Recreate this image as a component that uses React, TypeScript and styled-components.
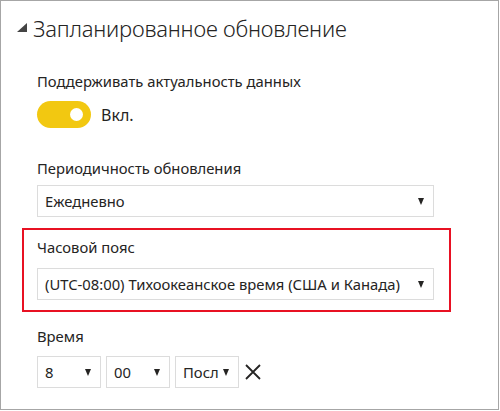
import React from "react";
import styled, { createGlobalStyle } from "styled-components";

const Global = createGlobalStyle`
  html, body { margin: 0; padding: 0; background: #fff; }
  body { font-family: "Noto Sans", "Open Sans", sans-serif; color: #252423; }
`;

const Frame = styled.div`
  box-sizing: border-box;
  width: 499px;
  height: 410px;
  border: 1px solid #a6a6a6;
  background: #fff;
  overflow: hidden;
`;

const Header = styled.div`
  display: flex;
  align-items: flex-start;
  gap: 6px;
  padding: 11px 0 0 16px;
  height: 32px;
`;

const CaretIcon = styled.svg`
  margin-top: 11px;
  flex-shrink: 0;
`;

const Title = styled.h2`
  margin: 0;
  font-weight: 300;
  font-size: 22px;
  line-height: 32px;
  color: #252423;
  letter-spacing: -0.2px;
`;

const Body = styled.div`
  display: flex;
  flex-direction: column;
  padding: 27px 0 0 36px;
`;

const Label = styled.div<{ $top?: number }>`
  font-size: 14.8px;
  line-height: 20px;
  color: #252423;
  margin-top: ${(p) => p.$top ?? 0}px;
`;

const ToggleRow = styled.div`
  display: flex;
  align-items: center;
  gap: 10px;
  margin-top: 10px;
`;

const Toggle = styled.div`
  position: relative;
  width: 54px;
  height: 27px;
  border-radius: 14px;
  background: #f2c811;
`;

const Knob = styled.div`
  position: absolute;
  right: 8px;
  top: 7px;
  width: 13px;
  height: 13px;
  border-radius: 50%;
  background: #fff;
`;

const ToggleText = styled.span`
  font-size: 16px;
  color: #252423;
`;

const Select = styled.div<{ $w: number; $top?: number }>`
  box-sizing: border-box;
  display: flex;
  align-items: center;
  justify-content: space-between;
  width: ${(p) => p.$w}px;
  height: 32px;
  border: 1px solid #dcdcdc;
  background: #fff;
  padding: 0 9px 0 7px;
  margin-top: ${(p) => p.$top ?? 0}px;
  font-size: 14.8px;
  color: #252423;
  white-space: nowrap;
  overflow: hidden;
`;

const Arrow = styled.span`
  width: 0;
  height: 0;
  border-left: 3.5px solid transparent;
  border-right: 3.5px solid transparent;
  border-top: 7px solid #252423;
  flex-shrink: 0;
`;

const Highlight = styled.div`
  box-sizing: border-box;
  width: 429px;
  margin: 11px 0 0 -15px;
  border: 2px solid #e81123;
  padding: 7px 0 10px 13px;
  display: flex;
  flex-direction: column;
`;

const TimeRow = styled.div`
  display: flex;
  align-items: center;
  gap: 5px;
  margin-top: 10px;
`;

const CloseIcon = styled.svg`
  margin-left: 1px;
`;

export default function App() {
  return (
    <>
      <Global />
      <Frame>
        <Header>
          <CaretIcon width="10" height="9" viewBox="0 0 10 9">
            <polygon points="10,0 10,9 0,9" fill="#444" />
          </CaretIcon>
          <Title>Запланированное обновление</Title>
        </Header>
        <Body>
          <Label>Поддерживать актуальность данных</Label>
          <ToggleRow>
            <Toggle>
              <Knob />
            </Toggle>
            <ToggleText>Вкл.</ToggleText>
          </ToggleRow>
          <Label $top={30}>Периодичность обновления</Label>
          <Select $w={397} $top={7}>
            <span>Ежедневно</span>
            <Arrow />
          </Select>
          <Highlight>
            <Label>Часовой пояс</Label>
            <Select $w={397} $top={11}>
              <span>(UTC-08:00) Тихоокеанское время (США и Канада)</span>
              <Arrow />
            </Select>
          </Highlight>
          <Label $top={14}>Время</Label>
          <TimeRow>
            <Select $w={64}>
              <span>8</span>
              <Arrow />
            </Select>
            <Select $w={64}>
              <span>00</span>
              <Arrow />
            </Select>
            <Select $w={64}>
              <span>Посл</span>
              <Arrow />
            </Select>
            <CloseIcon width="16" height="16" viewBox="0 0 16 16">
              <path d="M1 1 L15 15 M15 1 L1 15" stroke="#252423" strokeWidth="1.8" fill="none" />
            </CloseIcon>
          </TimeRow>
        </Body>
      </Frame>
    </>
  );
}
